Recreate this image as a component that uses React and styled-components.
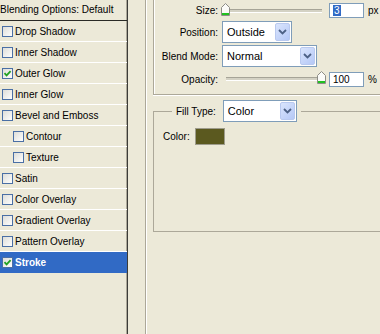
import React from "react";
import styled, { createGlobalStyle } from "styled-components";

const Global = createGlobalStyle`
  html, body { margin: 0; padding: 0; background: #ece9d8; }
  body { font-family: "Liberation Sans", Arial, sans-serif; font-size: 10px; color: #000; }
`;

const effects = [
  { name: "Drop Shadow" },
  { name: "Inner Shadow" },
  { name: "Outer Glow", checked: true },
  { name: "Inner Glow" },
  { name: "Bevel and Emboss" },
  { name: "Contour", indent: true },
  { name: "Texture", indent: true },
  { name: "Satin" },
  { name: "Color Overlay" },
  { name: "Gradient Overlay" },
  { name: "Pattern Overlay" },
  { name: "Stroke", checked: true, selected: true },
];

const CheckBox = ({ checked }) => (
  <svg width="11" height="11" viewBox="0 0 11 11">
    <defs>
      <linearGradient id="cbg" x1="0" y1="0" x2="1" y2="1">
        <stop offset="0" stopColor="#dcdcd7" />
        <stop offset="1" stopColor="#ffffff" />
      </linearGradient>
    </defs>
    <rect x="0.5" y="0.5" width="10" height="10" fill="url(#cbg)" stroke="#4a6fa5" />
    {checked && (
      <path d="M2.5 5.2 L4.6 7.4 L8.6 3.2" fill="none" stroke="#21a121" strokeWidth="1.8" />
    )}
  </svg>
);

const Thumb = () => (
  <svg width="9" height="13" viewBox="0 0 9 13">
    <path d="M4.5 0.5 L8.5 4.5 L8.5 12.5 L0.5 12.5 L0.5 4.5 Z" fill="#fbfbf8" stroke="#8d8d86" />
    <rect x="1" y="10" width="7" height="2" fill="#21c121" />
  </svg>
);

const Chevron = () => (
  <svg width="9" height="6" viewBox="0 0 9 6">
    <path d="M1 1 L4.5 4.5 L8 1" fill="none" stroke="#4d6185" strokeWidth="1.8" />
  </svg>
);

const Slider = ({ value }) => (
  <Track>
    <ThumbWrap style={{ left: `${value}%` }}>
      <Thumb />
    </ThumbWrap>
  </Track>
);

const Select = ({ value, width }) => (
  <SelectBox $w={width}>
    <SelectText>{value}</SelectText>
    <ArrowBtn>
      <Chevron />
    </ArrowBtn>
  </SelectBox>
);

const App = () => (
  <>
    <Global />
    <Window>
      <LeftPanel>
        <Header>Blending Options: Default</Header>
        {effects.map((e) => (
          <Row key={e.name} $selected={e.selected} $indent={e.indent}>
            <CheckBox checked={e.checked} />
            <RowLabel $selected={e.selected}>{e.name}</RowLabel>
          </Row>
        ))}
      </LeftPanel>
      <RightArea>
        <OuterGroup>
          <StructureGroup>
            <FieldLabel>Size:</FieldLabel>
            <Controls>
              <Slider value={0} />
              <NumBox>
                <Selected>3</Selected>
              </NumBox>
              <Unit>px</Unit>
            </Controls>
            <FieldLabel>Position:</FieldLabel>
            <Controls>
              <Select value="Outside" width={70} />
            </Controls>
            <FieldLabel>Blend Mode:</FieldLabel>
            <Controls>
              <Select value="Normal" width={95} />
            </Controls>
            <FieldLabel>Opacity:</FieldLabel>
            <Controls>
              <Slider value={100} />
              <NumBox>100</NumBox>
              <Unit>%</Unit>
            </Controls>
          </StructureGroup>
          <FillGroup>
            <Legend>
              <span>Fill Type:</span>
              <Select value="Color" width={74} />
            </Legend>
            <ColorRow>
              <span>Color:</span>
              <Swatch />
            </ColorRow>
          </FillGroup>
        </OuterGroup>
      </RightArea>
    </Window>
  </>
);

const Window = styled.div`
  display: flex;
  width: 380px;
  height: 334px;
  overflow: hidden;
  background: #ece9d8;
`;

const LeftPanel = styled.div`
  width: 127px;
  flex-shrink: 0;
  border-right: 1px solid #3c3c38;
  box-shadow: inset -1px 0 0 #aca899;
  display: flex;
  flex-direction: column;
`;

const Header = styled.div`
  height: 20px;
  line-height: 20px;
  border-bottom: 1px solid #2a2a26;
  white-space: nowrap;
`;

const Row = styled.div`
  height: 20px;
  display: flex;
  align-items: center;
  gap: 2px;
  padding-left: ${(p) => (p.$indent ? 13 : 2)}px;
  border-bottom: 1px solid ${(p) => (p.$selected ? "#316ac5" : "#ffffff")};
  background: ${(p) => (p.$selected ? "#316ac5" : "transparent")};
  svg {
    flex-shrink: 0;
  }
`;

const RowLabel = styled.span`
  white-space: nowrap;
  color: ${(p) => (p.$selected ? "#fff" : "#000")};
  font-weight: ${(p) => (p.$selected ? "bold" : "normal")};
`;

const RightArea = styled.div`
  flex: 1;
  padding-left: 17px;
  overflow: hidden;
`;

const OuterGroup = styled.div`
  height: 100%;
  border-left: 1px solid #aca899;
  box-shadow: inset 1px 0 0 #fff;
  padding-left: 7px;
`;

const StructureGroup = styled.div`
  display: grid;
  grid-template-columns: 63px 1fr;
  grid-template-rows: 19px 24px 24px 22px;
  column-gap: 4px;
  padding: 1px 0 4px 1px;
  border-left: 1px solid #aca899;
  border-bottom: 1px solid #aca899;
  box-shadow: inset 1px 0 0 #fff, 0 1px 0 #fff;
  align-items: center;
`;

const FieldLabel = styled.div`
  text-align: right;
  white-space: nowrap;
`;

const Controls = styled.div`
  display: flex;
  align-items: center;
`;

const Track = styled.div`
  position: relative;
  width: 96px;
  height: 2px;
  margin: 0 7px 0 4px;
  background: #d4d2c4;
  border-top: 1px solid #a6a497;
  border-bottom: 1px solid #fff;
`;

const ThumbWrap = styled.div`
  position: absolute;
  top: -7px;
  margin-left: -5px;
  line-height: 0;
`;

const NumBox = styled.div`
  width: 30px;
  height: 13px;
  box-sizing: content-box;
  border: 1px solid #7f9db9;
  background: #fff;
  display: flex;
  align-items: center;
  padding-left: 3px;
  font-size: 10px;
`;

const Selected = styled.span`
  background: #316ac5;
  color: #fff;
  padding: 0 1px;
`;

const Unit = styled.span`
  margin-left: 4px;
  white-space: nowrap;
`;

const SelectBox = styled.div`
  width: ${(p) => p.$w}px;
  height: 22px;
  box-sizing: border-box;
  border: 1px solid #7f9db9;
  background: #fff;
  display: flex;
  align-items: center;
  justify-content: space-between;
  padding: 1px;
`;

const SelectText = styled.span`
  padding-left: 3px;
  font-size: 11px;
`;

const ArrowBtn = styled.div`
  width: 15px;
  height: 18px;
  box-sizing: border-box;
  border: 1px solid #b9c9ef;
  border-radius: 2px;
  background: linear-gradient(135deg, #dae5fd 0%, #b5c8f6 100%);
  display: flex;
  align-items: center;
  justify-content: center;
`;

const FillGroup = styled.fieldset`
  margin: 5px 0 0 0;
  padding: 6px 0 0 9px;
  height: 132px;
  box-sizing: border-box;
  border: 1px solid #aca899;
  border-right: none;
`;

const Legend = styled.legend`
  margin-left: 9px;
  padding: 0 4px;
  display: flex;
  align-items: center;
  gap: 7px;
`;

const ColorRow = styled.div`
  display: flex;
  align-items: center;
  gap: 5px;
`;

const Swatch = styled.div`
  width: 28px;
  height: 15px;
  background: #5b591f;
  border: 1px solid #9e9c8c;
`;

export default App;
